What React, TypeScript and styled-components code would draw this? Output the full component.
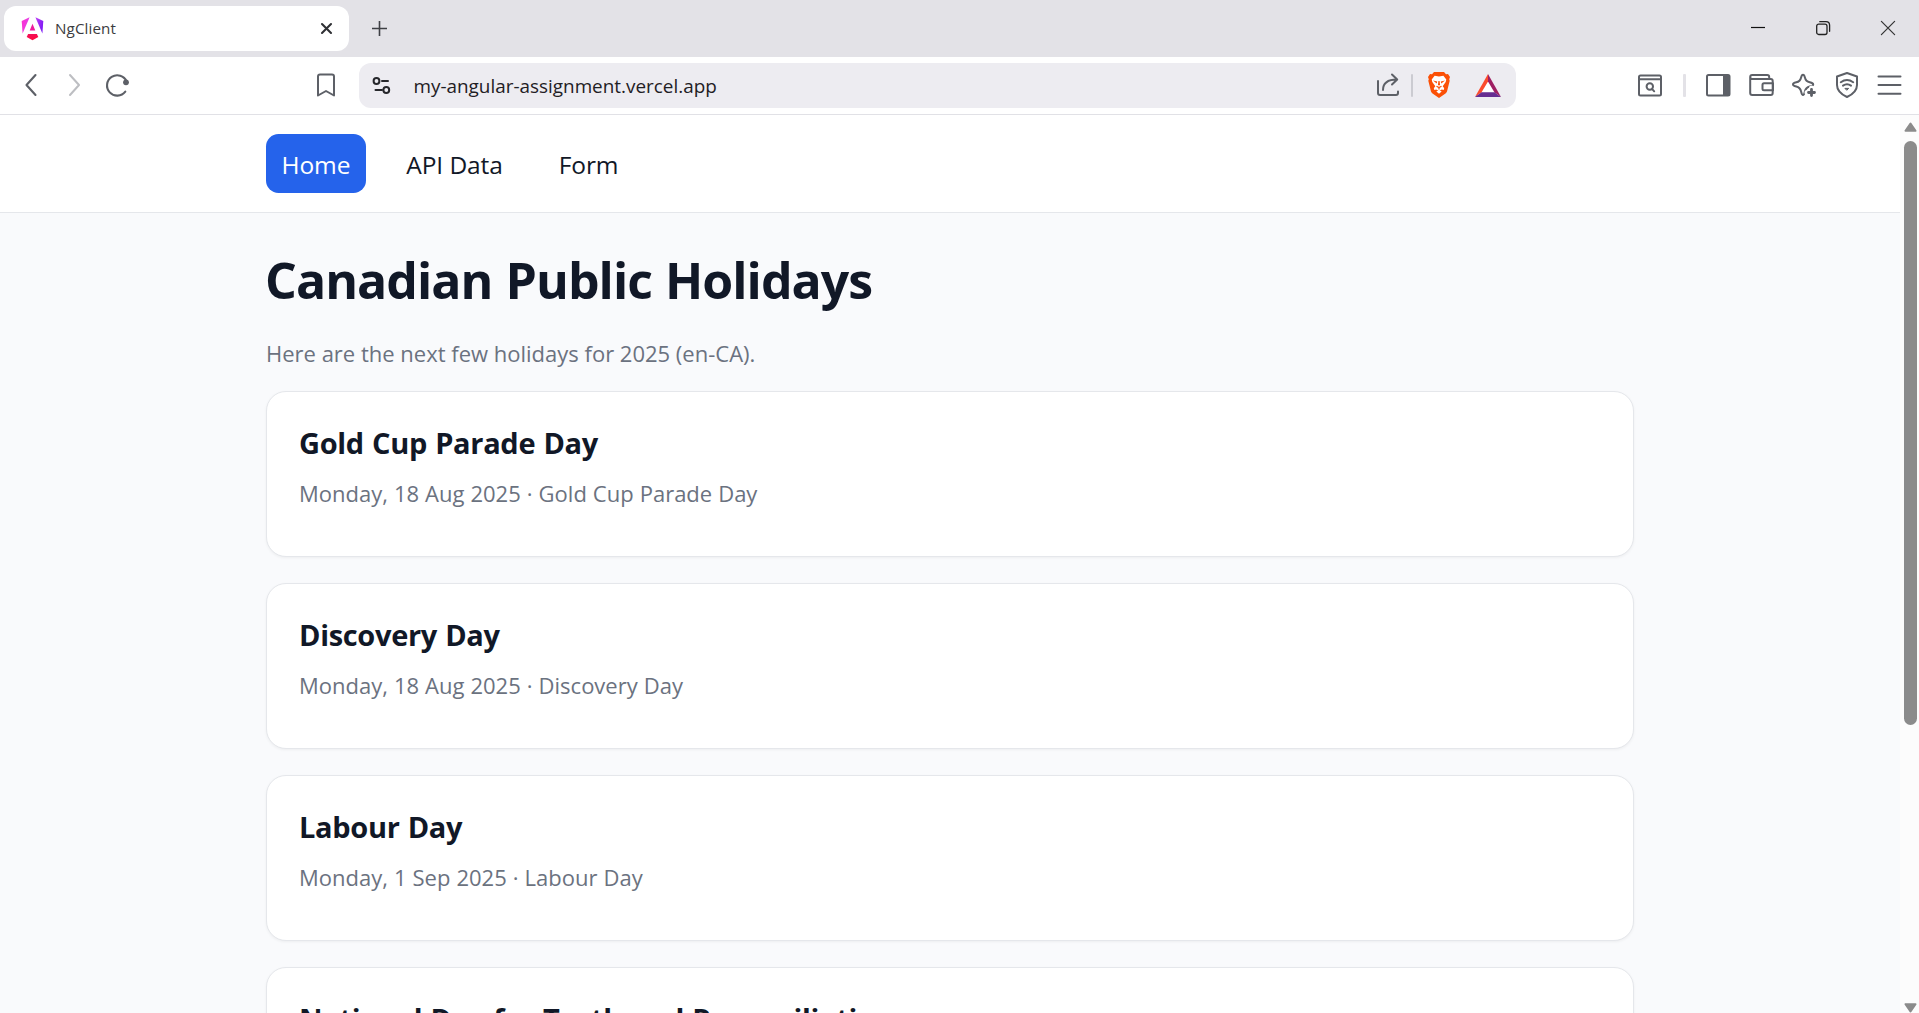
import React from 'react';
import styled, { createGlobalStyle } from 'styled-components';

const FONT = '"Open Sans", "Noto Sans", sans-serif';

const GlobalStyle = createGlobalStyle`
  *, *::before, *::after { box-sizing: border-box; }
  html, body { margin: 0; padding: 0; overflow: hidden; }
  body { background: #fff; font-family: ${FONT}; }
  h1, h2, p { margin: 0; }
  svg { display: block; flex: none; overflow: visible; }
`;

const Window = styled.div`
  display: flex;
  flex-direction: column;
  width: 100vw;
  height: 100vh;
  overflow: hidden;
`;

/* Browser chrome */

const TabStrip = styled.header`
  flex: none;
  display: flex;
  align-items: flex-start;
  height: 57px;
  padding: 6px 24px 0 4px;
  background: #e3e2e7;
`;

const Tab = styled.div`
  display: flex;
  align-items: center;
  width: 345px;
  height: 45px;
  padding: 0 17px 0 17px;
  border-radius: 12px;
  background: #fff;
`;

const TabTitle = styled.span`
  flex: 1;
  margin: -1px 0 0 10px;
  font-size: 15.2px;
  line-height: 20px;
  letter-spacing: 0.1px;
  color: #3b3c40;
`;

const NewTab = styled.div`
  margin: 15px 0 0 23px;
`;

const WindowControls = styled.div`
  display: flex;
  gap: 51px;
  margin: 15px 0 0 auto;
`;

const Toolbar = styled.nav`
  flex: none;
  display: flex;
  align-items: center;
  height: 58px;
  padding: 0 17px 1px 22px;
  border-bottom: 1px solid #e1e1e6;
  background: #fff;
`;

const NavButtons = styled.div`
  display: flex;
  align-items: center;
  gap: 18px;
  width: 293px;
`;

const AddressBar = styled.div`
  display: flex;
  align-items: center;
  width: 1157px;
  height: 45px;
  margin-left: 20px;
  padding: 0 15px 0 12px;
  border-radius: 12px;
  background: #edecf1;
`;

const Url = styled.span`
  flex: 1;
  margin-left: 21.5px;
  padding-top: 2px;
  font-size: 18.9px;
  line-height: 26px;
  color: #1f2024;
`;

const AddressActions = styled.div`
  display: flex;
  align-items: center;
`;

const Divider = styled.span<{ $width: number; $color: string; $left: number; $right: number }>`
  width: ${(p) => p.$width}px;
  height: 23px;
  margin: 0 ${(p) => p.$right}px 0 ${(p) => p.$left}px;
  border-radius: 1px;
  background: ${(p) => p.$color};
`;

const ToolbarActions = styled.div`
  display: flex;
  align-items: center;
  margin-left: auto;
`;

const ActionGroup = styled.div`
  display: flex;
  align-items: center;
  gap: 18px;
`;

/* Web page */

const Viewport = styled.div`
  flex: 1;
  display: flex;
  min-height: 0;
`;

const Page = styled.div`
  flex: 1;
  min-width: 0;
  overflow: hidden;
  background: #f9fafc;
`;

const SiteNav = styled.nav`
  display: flex;
  gap: 25px;
  height: 98px;
  padding: 19px 266px;
  border-bottom: 1px solid #e5e7eb;
  background: #fff;
`;

const NavLink = styled.a<{ $active?: boolean }>`
  display: flex;
  align-items: center;
  height: 59px;
  padding: 1px 15.5px 0;
  border-radius: 12.5px;
  font-size: 24.5px;
  letter-spacing: -0.1px;
  white-space: nowrap;
  color: ${(p) => (p.$active ? '#fff' : '#111827')};
  background: ${(p) => (p.$active ? '#2563eb' : 'transparent')};
`;

const Main = styled.main`
  padding: 33px 266px 0;
`;

const Title = styled.h1`
  font-size: 50px;
  font-weight: 700;
  line-height: 68px;
  letter-spacing: -0.95px;
  word-spacing: 1px;
  margin-left: -1px;
  color: #111827;
`;

const Lead = styled.p`
  margin: 23px 0 22px;
  font-size: 22px;
  line-height: 32px;
  color: #6b7280;
`;

const HolidayList = styled.div`
  display: flex;
  flex-direction: column;
  gap: 25.6px;
`;

const Card = styled.article`
  flex: none;
  height: 166.4px;
  padding: 31px 32px;
  border: 1px solid #e5e7eb;
  border-radius: 20px;
  background: #fff;
  box-shadow: 0 1px 3px rgba(0, 0, 0, 0.05);
`;

const CardTitle = styled.h2`
  font-size: 29px;
  font-weight: 700;
  line-height: 40px;
  letter-spacing: -0.32px;
  word-spacing: 1px;
  color: #111827;
`;

const CardMeta = styled.p`
  margin-top: 14px;
  font-size: 22px;
  line-height: 32px;
  word-spacing: 0.3px;
  color: #6b7280;
`;

const Scrollbar = styled.aside`
  flex: none;
  display: flex;
  flex-direction: column;
  align-items: center;
  width: 19px;
  padding: 7px 0 0 2px;
  background: #fcfcfc;
`;

const Thumb = styled.div`
  width: 13px;
  height: 584px;
  margin: 9px 0 auto;
  border-radius: 7px;
  background: #8b8b8b;
`;

/* Icons */

const INK = '#5d6067';

const Svg = ({ w, h, children, color = INK, sw = 2 }: {
  w: number; h: number; children: React.ReactNode; color?: string; sw?: number;
}) => (
  <svg width={w} height={h} viewBox={`0 0 ${w} ${h}`} fill="none" stroke={color}
    strokeWidth={sw} strokeLinecap="round" strokeLinejoin="round">{children}</svg>
);

const AngularIcon = () => (
  <svg width="24" height="24" viewBox="0 0 24 24">
    <defs>
      <linearGradient id="ngLeft" x1="0" y1="0" x2="1" y2="0.3">
        <stop offset="0" stopColor="#ff30d0" /><stop offset="1" stopColor="#e040e8" />
      </linearGradient>
      <linearGradient id="ngRight" x1="0" y1="0" x2="1" y2="0.6">
        <stop offset="0" stopColor="#c13ff5" /><stop offset="1" stopColor="#7a17f5" />
      </linearGradient>
      <linearGradient id="ngBase" x1="0" y1="0" x2="0.4" y2="1">
        <stop offset="0" stopColor="#f0105c" /><stop offset="1" stopColor="#ff0a40" />
      </linearGradient>
    </defs>
    <path d="M8.600 0.200 0.700 4l.9 12.600z" fill="url(#ngLeft)" />
    <path d="m14.400.2 7.900 3.800-.9 12.600z" fill="url(#ngRight)" />
    <path d="M11.500 6.800 8.700 13.600h5.600z" fill="#ee1c9c" />
    <path d="M7.100 16.900h8.800l1.400 3-5.800 3.400-5.800-3.400z" fill="url(#ngBase)" />
  </svg>
);

const BraveIcon = () => (
  <svg width="22" height="26" viewBox="0 0 22 26">
    <path d="M6 0h10l2 2.200 2-.2 2 3-.8 2.200.5 1.600L19 19.500q-.4 1.200-1.500 2L11 26l-6.500-4.500q-1.100-.8-1.500-2L.3 8.800.8 7.200 0 5l2-3 2 .2z" fill="#fb5006" />
    <path d="M6.600 3.800 11 4.600l4.400-.8 2.900 3.800-.6 2.400-3 4.200 1.500 2.100-.5 1.600-2-.5L11 19.200l-2.700-1.800-2 .5-.5-1.600 1.500-2.100-3-4.200-.6-2.400z" fill="#fff" />
    <path d="m5 8.400 4.200 1-.5 2zM17 8.400l-4.200 1 .5 2zM10.400 9h1.200l.5 4.300h-2.200z" fill="#fb5006" />
    <path d="m8.500 14.300 2.500 1.300 2.500-1.300M11 15.400v2" stroke="#fb5006" strokeWidth="1.200" fill="none" />
    <path d="M8.300 19.400 11 18.200l2.700 1.200L11 21.700z" fill="#fff" />
  </svg>
);

const BatIcon = () => (
  <svg width="26" height="23" viewBox="0 0 26 23">
    <path d="M13 7 20 18.500H6z" fill="#fff" />
    <path d="M13 0v7.500L6.600 18.300 0 23z" fill="#fb4b2d" />
    <path d="M13 0v7.500l6.400 10.800L26 23z" fill="#9e1f63" />
    <path d="M6.600 18.300h12.800L26 23H0z" fill="#662d91" />
  </svg>
);

const HOLIDAYS = [
  { name: 'Gold Cup Parade Day', date: 'Monday, 18 Aug 2025' },
  { name: 'Discovery Day', date: 'Monday, 18 Aug 2025' },
  { name: 'Labour Day', date: 'Monday, 1 Sep 2025' },
  { name: 'National Day for Truth and Reconciliation' },
];

const BrowserTabs = () => (
  <TabStrip>
    <Tab>
      <AngularIcon />
      <TabTitle>NgClient</TabTitle>
      <Svg w={11} h={11} color="#2f3034" sw={2.1}><path d="m1 1 9 9M10 1l-9 9" /></Svg>
    </Tab>
    <NewTab><Svg w={15} h={15} color="#3f4045" sw={1.6}><path d="M7.500 0v15M0 7.500h15" strokeLinecap="butt" /></Svg></NewTab>
    <WindowControls>
      <Svg w={14} h={14} color="#111" sw={1.2}><path d="M0 6.500h14" strokeLinecap="butt" /></Svg>
      <Svg w={14} h={14} color="#222" sw={1.3}>
        <rect x=".7" y="3.200" width="10.300" height="10.300" rx="2" />
        <path d="M3.800.700H10Q13.600.700 13.600 4.300v6" />
      </Svg>
      <Svg w={14} h={14} color="#333" sw={1.2}><path d="m.4.400 13.200 13.200M13.600.400.400 13.600" /></Svg>
    </WindowControls>
  </TabStrip>
);

const BrowserToolbar = () => (
  <Toolbar>
    <NavButtons>
      <Svg w={24} h={24} sw={2.100}><path d="M13.500 2 4.500 12l9 10" /></Svg>
      <Svg w={24} h={24} color="#bdbec2"><path d="m6 2 9 10-9 10" /></Svg>
      <Svg w={24} h={24} sw={2.100}>
        <path d="M20.600 8.400A10.200 10.200 0 1 0 19.300 18.700" />
        <circle cx="20" cy="9.300" r="2.900" fill={INK} stroke="none" />
      </Svg>
    </NavButtons>
    <Svg w={24} h={24}><path d="M5 1.500h12q2 0 2 2V22.500L11 18 3 22.500V3.500q0-2 2-2z" /></Svg>
    <AddressBar>
      <Svg w={21} h={20} color="#26272b" sw={2}>
        <circle cx="5.500" cy="6" r="2.900" /><path d="M11 6h6" />
        <circle cx="15.300" cy="15" r="2.900" /><path d="M4.500 15h6.500" />
      </Svg>
      <Url>my-angular-assignment.vercel.app</Url>
      <AddressActions>
        <Svg w={23} h={24}>
          <path d="M1 8v12q0 2 2 2h16q2 0 2-2v-1.500" />
          <path d="M6 17C6 10 10 6.500 20 6.500M15 1.500l5.200 5L15 11.500" />
        </Svg>
        <Divider $width={1.5} $color="#cbcbd1" $left={11.5} $right={15.5} />
        <BraveIcon />
        <Divider $width={0} $color="transparent" $left={12} $right={13} />
        <BatIcon />
      </AddressActions>
    </AddressBar>
    <ToolbarActions>
      <Svg w={24} h={22}>
        <rect x="1" y="1.500" width="22" height="20" rx="1.500" /><path d="M1 5.300h22" />
        <circle cx="11.800" cy="12.500" r="3.200" /><path d="m14.200 15.100 2 2.200" />
      </Svg>
      <Divider $width={3} $color="#e3e2e7" $left={21} $right={20} />
      <ActionGroup>
        <Svg w={25} h={23}>
          <rect x="1" y="1" width="22.500" height="20.500" rx="1.500" />
          <path d="M17 1h5q1.500 0 1.500 1.500v17.500q0 1.500-1.500 1.500h-5z" fill={INK} stroke="none" />
          <path d="M18 1v20" strokeLinecap="butt" />
        </Svg>
        <Svg w={25} h={23}>
          <path d="M1.200 3v16q0 2 2 2h18.500q2 0 2-2V7q0-2-2-2H3.200q-2 0-2-2t2-2h15q2 0 2 2v1.500" />
          <path d="M24 9.300h-9q-1.500 0-1.500 1.500v4q0 1.500 1.500 1.500h9z" />
        </Svg>
        <Svg w={25} h={25}>
          <path d="M11 1.800c1.200 0 1.500 1 1.900 2.600.7 3 1.900 4.200 4.800 4.900 2.300.6 3.500.9 3.500 2.100s-1.200 1.500-3.500 2.100c-2.900.7-4.100 1.900-4.800 4.900-.4 1.600-.7 3.600-1.900 3.600s-1.500-2-1.900-3.600c-.7-3-1.900-4.200-4.800-4.900C2 12.900 1 12.600 1 11.400s1-1.500 3.300-2.100c2.900-.7 4.100-1.900 4.800-4.900C9.500 2.800 9.800 1.800 11 1.800z" />
          <path d="M19.500 15v9M15 19.500h9" stroke="#fff" strokeWidth="5" />
          <path d="M19.500 16.500v6M16.500 19.500h6" strokeWidth="2.800" />
        </Svg>
        <Svg w={24} h={26}>
          <path d="M12 1 22 4.500V13c0 5.500-3.500 9-10 12C5.500 22 2 18.500 2 13V4.500z" />
          <path d="M5.800 10.200q6.200-4.400 12.400 0M8 13.600q4-2.800 8 0" />
          <path d="M10.300 16.400h3.400L12 18z" fill={INK} strokeWidth="1" />
        </Svg>
        <Svg w={25} h={20}><path d="M1.500 1.500h22M1.500 10h22M1.500 18.700h22" /></Svg>
      </ActionGroup>
    </ToolbarActions>
  </Toolbar>
);

export default function App() {
  return (
    <Window>
      <GlobalStyle />
      <BrowserTabs />
      <BrowserToolbar />
      <Viewport>
        <Page>
          <SiteNav>
            <NavLink $active>Home</NavLink>
            <NavLink>API Data</NavLink>
            <NavLink>Form</NavLink>
          </SiteNav>
          <Main>
            <Title>Canadian Public Holidays</Title>
            <Lead>Here are the next few holidays for 2025 (en-CA).</Lead>
            <HolidayList>
              {HOLIDAYS.map((h) => (
                <Card key={h.name}>
                  <CardTitle>{h.name}</CardTitle>
                  {h.date && <CardMeta>{h.date} · {h.name}</CardMeta>}
                </Card>
              ))}
            </HolidayList>
          </Main>
        </Page>
        <Scrollbar>
          <Svg w={13} h={10} color="#8b8b8b"><path d="M6.500 1.500 11.500 8.800H1.500z" fill="#8b8b8b" /></Svg>
          <Thumb />
          <Svg w={13} h={10} color="#8b8b8b"><path d="M6.500 8.500 1.500 1.200h10z" fill="#8b8b8b" /></Svg>
        </Scrollbar>
      </Viewport>
    </Window>
  );
}
